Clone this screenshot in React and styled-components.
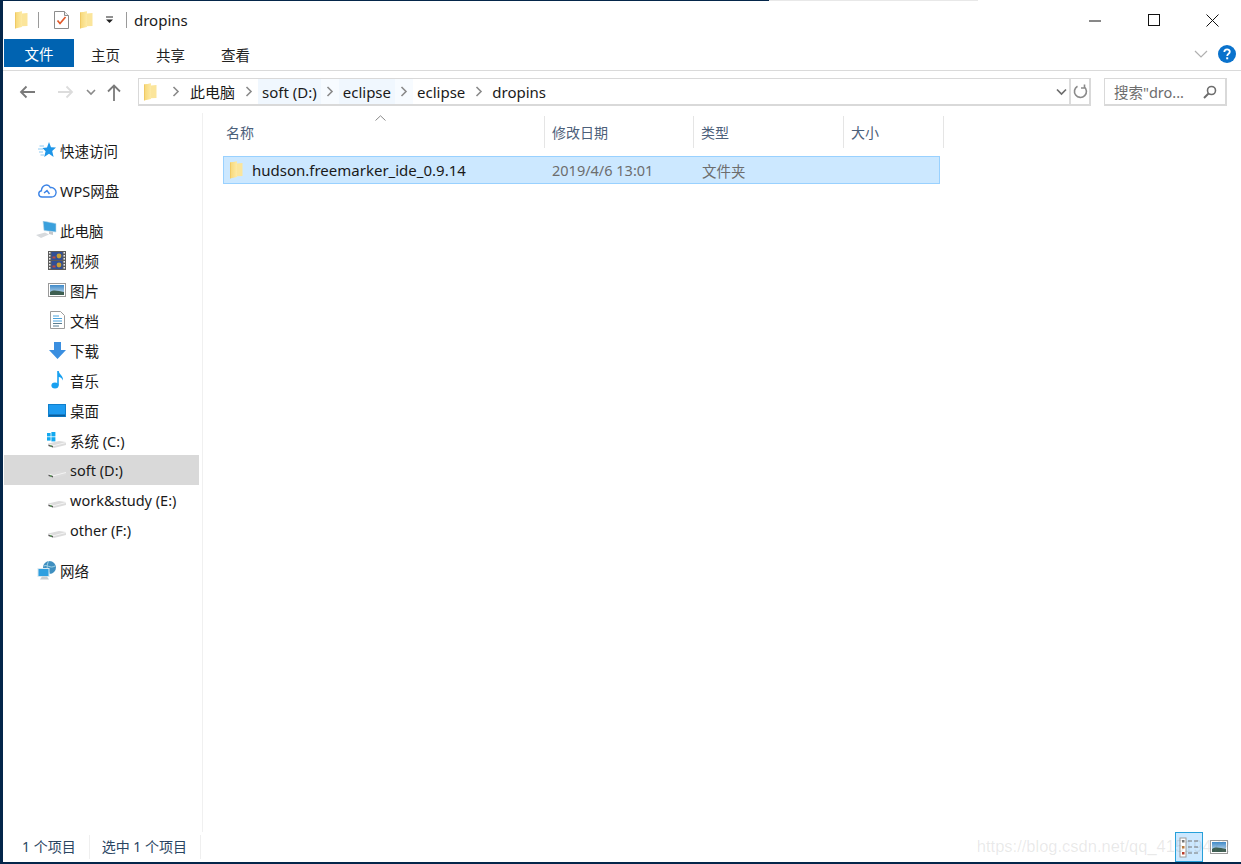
import React from 'react';
import styled, { createGlobalStyle } from 'styled-components';

const Global = createGlobalStyle`
  html, body { margin: 0; padding: 0; background: #fff; overflow: hidden; }
  * { box-sizing: border-box; }
  body { font-family: "Noto Sans", "Noto Sans CJK SC", sans-serif; font-size: 15px; color: #1a1a1a; }
`;

const Shell = styled.div`
  position: relative; width: 1241px; height: 864px; background: #fff;
  border-left: 3px solid #04264a; border-bottom: 2px solid #04264a;
  display: flex; flex-direction: column; overflow: hidden;
`;
const TopEdge = styled.div`
  height: 1px; flex: none;
  background: linear-gradient(90deg, #04264a 0, #04264a 766px, #e8e8e8 766px, #e8e8e8 975px, #fff 975px);
`;
const TitleBar = styled.div`
  height: 38px; flex: none; display: flex; align-items: center; padding-left: 12px;
`;
const TitleTools = styled.div`
  display: flex; align-items: center; flex: 1;
`;
const Sep = styled.span`
  width: 1px; height: 16px; background: #9a9a9a; margin: ${p => p.$m};
`;
const TitleText = styled.span`
  font-size: 15px; line-height: 20px; color: #1a1a1a; margin-left: 7px;
`;
const WinControls = styled.div`
  display: flex; align-items: center; height: 100%; margin-right: -1px;
`;
const WinBtn = styled.div`
  width: 58.5px; height: 100%; display: flex; align-items: center; justify-content: center; padding-top: 1px;
`;
const Ribbon = styled.div`
  height: 32px; flex: none; display: flex; align-items: flex-start; border-bottom: 1px solid #dadada;
  margin-left: 0; padding-left: 1px; position: relative;
`;
const FileTab = styled.div`
  width: 70px; height: 28px; background: #0063b1; color: #fff; font-size: 14.5px;
  display: flex; align-items: center; justify-content: center;
`;
const RibbonTabs = styled.div`
  display: flex; gap: 35px; margin-left: 17px; height: 28px; align-items: center; flex: 1; padding-top: 4px;
`;
const RibbonTab = styled.span`
  width: 30px; font-size: 14.5px; line-height: 20px; color: #222; white-space: nowrap;
`;
const RibbonRight = styled.div`
  display: flex; align-items: center; gap: 10px; margin-right: 5px; height: 30px;
`;
const NavBar = styled.div`
  height: 42px; flex: none; display: flex; align-items: flex-start; padding-top: 7px;
`;
const NavButtons = styled.div`
  width: 135px; height: 28px; flex: none; display: flex; align-items: center; padding-left: 16px;
`;
const Address = styled.div`
  width: 953px; height: 28px; flex: none; border: 2px solid #d9d9d9; border-width: 1px 2px 2px 1px; display: flex; align-items: stretch;
`;
const Crumbs = styled.div`
  flex: 1; display: flex; align-items: stretch; padding-left: 5px; min-width: 0;
`;
const CrumbIcon = styled.div`
  display: flex; align-items: center; width: 22px;
`;
const Crumb = styled.span`
  display: flex; align-items: center; padding: 0 ${p => p.$pad ?? 4}px; background: ${p => p.$hover ? '#f0f7fe' : 'transparent'};
  font-size: 15px; color: #1a1a1a; white-space: nowrap; margin-bottom: 0;
`;
const CrumbChevron = styled.span`
  display: flex; align-items: center; justify-content: center; width: ${p => p.$w}px;
  background: ${p => p.$hover ? '#f7fbff' : 'transparent'};
`;
const AddrEnd = styled.div`
  display: flex; align-items: center; justify-content: center; width: ${p => p.$w}px;
  border-left: ${p => p.$line ? '2px solid #dcdcdc' : 'none'};
`;
const Search = styled.div`
  width: 123px; height: 28px; margin-left: 13px; border: 2px solid #d9d9d9; border-width: 1px 2px 2px 1px; display: flex; align-items: center;
  padding: 0 8px 0 9px; justify-content: space-between; color: #6d6d6d; font-size: 14.5px; white-space: nowrap;
`;
const Body = styled.div`
  flex: 1; display: flex; min-height: 0;
`;
const Sidebar = styled.nav`
  width: 199px; flex: none; margin-right: 0; padding: 22px 0 0 1px; border-right: 0;
  display: flex; flex-direction: column;
`;
const SideDivider = styled.div`
  width: 1px; flex: none; background: #f0f0f0; margin-left: 0;
`;
const Group = styled.div`
  margin-bottom: 10px;
`;
const SideItem = styled.div`
  height: 30px; width: 195px; display: flex; align-items: center; font-size: 14.5px; color: #1a1a1a; white-space: nowrap;
  padding-left: ${p => p.$child ? 41 : 31}px; background: ${p => p.$on ? '#d9d9d9' : 'transparent'};
`;
const SideIcon = styled.span`
  width: ${p => p.$child ? 24 : 24}px; height: 20px; flex: none; display: flex; align-items: center; justify-content: center; margin-right: 1px;
`;
const Content = styled.main`
  flex: 1; display: flex; flex-direction: column; padding: 3px 0 0 19px; position: relative;
`;
const SortCaret = styled.svg`
  position: absolute; left: 172px; top: 2px;
`;
const HeaderRow = styled.div`
  display: flex; height: 32px; flex: none;
`;
const HeaderCell = styled.div`
  width: ${p => p.$w}px; padding-left: ${p => p.$pl ?? 7}px; border-right: 1px solid #e5e5e5; display: flex; align-items: center;
  font-size: 14px; color: #4c607a;
`;
const FileRow = styled.div`
  display: flex; align-items: center; width: 717px; height: 28px; margin: 8px 0 0 0; background: #cce8ff; border: 1px solid #99d1ff;
  margin-left: 1px;
`;
const FileName = styled.div`
  width: 321px; display: flex; align-items: center; padding-left: 6px; gap: 9px; font-size: 15px; color: #1a1a1a; white-space: nowrap;
`;
const FileMeta = styled.div`
  width: ${p => p.$w}px; padding-left: 7px; font-size: 14.5px; color: #6d6d6d; white-space: nowrap;
`;
const StatusBar = styled.footer`
  height: 30px; flex: none; display: flex; align-items: center; position: relative; padding-left: 19px;
  font-size: 14px; color: #2a4562;
`;
const StatusCell = styled.span`
  white-space: nowrap; padding-right: ${p => p.$pr}px; margin-right: 12px; border-right: 1px solid #efefef; line-height: 24px;
`;
const StatusSpacer = styled.div`
  flex: 1;
`;
const ViewBtn = styled.div`
  width: 28px; height: 30px; display: flex; align-items: center; justify-content: center;
  background: ${p => p.$on ? '#cce8ff' : 'transparent'}; border: ${p => p.$on ? '1px solid #26a0da' : 'none'};
`;
const ViewBtns = styled.div`
  display: flex; gap: 2px; margin-right: 8px; align-self: flex-end;
`;
const Watermark = styled.div`
  position: absolute; right: 11px; bottom: 6px; font-family: "Liberation Sans", sans-serif; font-size: 16.5px; color: rgba(120,120,120,.16); white-space: nowrap;
`;

const Folder = ({ w = 13, h = 18 }) => (
  <svg width={w} height={h} viewBox="0 0 13 18">
    <defs>
      <linearGradient id="fg" x1="0" y1="0" x2="1" y2="0">
        <stop offset="0" stopColor="#f7d774" /><stop offset="1" stopColor="#fdeaa6" />
      </linearGradient>
    </defs>
    <path d="M0 1.5 L7 0.5 V2.5 L12.5 2 V15 L0 15.5Z" fill="#fbe59b" />
    <path d="M0 1.5 L7 .5 V16 L0 17.5Z" fill="url(#fg)" />
    <path d="M0 1.5 L0 17.5" stroke="#e3b54d" strokeWidth=".8" />
  </svg>
);
const CheckDoc = () => (
  <svg width="15" height="18" viewBox="0 0 15 18">
    <path d="M.5.5H10.5L14.5 4.5V17.5H.5Z" fill="#fff" stroke="#8c8c8c" />
    <path d="M10.5.5V4.5H14.5" fill="#eee" stroke="#8c8c8c" />
    <path d="M3.5 9.5 L6 12.5 L11.5 6" fill="none" stroke="#e2592a" strokeWidth="1.7" />
  </svg>
);
const DropMark = () => (
  <svg width="9" height="8" viewBox="0 0 9 8"><path d="M1 1H8" stroke="#222" /><path d="M1 3.5H8L4.5 7Z" fill="#222" /></svg>
);
const Chevron = ({ c = '#8a8a8a' }) => (
  <svg width="8" height="11" viewBox="0 0 8 11"><path d="M1.5 1 L6 5.5 L1.5 10" fill="none" stroke={c} strokeWidth="1.6" /></svg>
);
const Star = () => (
  <svg width="18" height="16" viewBox="0 0 18 16">
    <path d="M11 0 L13 5.2 L18 5.6 L14.2 9 L15.6 15 L11 11.8 L6.2 15 L7.6 9.2 L4.4 6 L9 5.4Z" fill="#1e96e8" />
    <path d="M1.5 4H6M0 7H5M1 10H5M2.5 13H6" stroke="#8ccaf3" strokeWidth="1" />
  </svg>
);
const Cloud = () => (
  <svg width="20" height="16" viewBox="0 0 20 16">
    <path d="M5 15 C1 15 .7 9.5 4.4 8.8 C4.6 4 10.5 .3 13.4 5.6 C16.5 5 19.5 8 19 11 C18.6 13.6 16.5 15 14.5 15Z M5 15H14.5 M7 11 L10 8.6 L12.5 12" fill="none" stroke="#3c84e6" strokeWidth="1.4" />
  </svg>
);
const Computer = () => (
  <svg width="22" height="18" viewBox="0 0 22 18">
    <path d="M7 0 L20 2.5 V11 L8 9.5Z" fill="#3aa0dc" stroke="#bcd8ea" strokeWidth=".6" />
    <path d="M13 10 L13 13 L17 14 L17 11Z" fill="#c4c8cc" />
    <path d="M0 14 L9 11.5 L13 13.5 L5 17Z" fill="#d7dadd" />
  </svg>
);
const FilmIcon = () => (
  <svg width="18" height="19" viewBox="0 0 18 19">
    <rect width="18" height="19" fill="#5c5c5c" />
    <rect x="3.5" y="1" width="11" height="8" fill="#314f96" /><rect x="3.5" y="10" width="11" height="8" fill="#314f96" />
    <circle cx="11" cy="5" r="2.4" fill="#c9a033" /><circle cx="11" cy="14" r="2.4" fill="#c9a033" />
    <rect x="4.5" y="5.5" width="3" height="2" fill="#c14b3a" /><rect x="4.5" y="14.5" width="3" height="2" fill="#c14b3a" />
    {[1, 4, 7, 10, 13, 16].map(y => <g key={y}><rect x="1" y={y} width="1.5" height="1.6" fill="#eee" /><rect x="15.5" y={y} width="1.5" height="1.6" fill="#eee" /></g>)}
  </svg>
);
const PictureIcon = ({ w = 18, h = 14 }) => (
  <svg width={w} height={h} viewBox="0 0 18 14">
    <defs><linearGradient id="sky" x1="0" y1="0" x2="0" y2="1"><stop offset="0" stopColor="#3f8ac9" /><stop offset="1" stopColor="#d6e6f2" /></linearGradient></defs>
    <rect x=".5" y=".5" width="17" height="13" fill="#fff" stroke="#9a9a9a" />
    <rect x="2" y="2" width="14" height="10" fill="url(#sky)" />
    <path d="M2 9 C6 6 10 8 16 9 V12 H2Z" fill="#3e5f52" />
  </svg>
);
const DocIcon = () => (
  <svg width="15" height="18" viewBox="0 0 15 18">
    <path d="M.5.5H10.5L14.5 4.5V17.5H.5Z" fill="#fff" stroke="#9c9c9c" />
    <path d="M3 5H9M3 7.5H12M3 10H12" stroke="#4aa2dc" />
    <path d="M3 12.5H12M3 15H9" stroke="#5a7d90" />
  </svg>
);
const DownIcon = () => (
  <svg width="17" height="17" viewBox="0 0 17 17"><path d="M5 0H12V8H17L8.5 17L0 8H5Z" fill="#3b8fe0" /></svg>
);
const NoteIcon = () => (
  <svg width="13" height="18" viewBox="0 0 13 18">
    <ellipse cx="4" cy="14.5" rx="3.6" ry="3" fill="#18a0f0" />
    <path d="M6.2 14.5V0H7.8C8 3.5 12.5 4.5 12 9.5C11 7.2 9.5 6.2 7.8 6V14.5Z" fill="#18a0f0" />
  </svg>
);
const DesktopIcon = () => (
  <svg width="18" height="13" viewBox="0 0 18 13">
    <rect x=".5" y=".5" width="17" height="12" fill="#1e9bf0" stroke="#0f7fcc" />
    <rect x="1" y="10.5" width="16" height="1.8" fill="#0a5f9e" />
  </svg>
);
const Drive = ({ win }) => (
  <svg width="20" height="18" viewBox="0 0 20 18">
    {win && <g fill="#12a8ef"><rect x="0" y="2" width="3.6" height="3.4" /><rect x="4.4" y="1" width="4" height="4.4" /><rect x="0" y="6.2" width="3.6" height="3.4" /><rect x="4.4" y="6.2" width="4" height="4.2" /></g>}
    <path d="M1 12.5 L12 10 L19 11 V14 L7 17 L1 15Z" fill="#dcdcdc" />
    <path d="M1 13 L7 14.6 L19 11.5" fill="none" stroke="#f4f4f4" />
    <path d="M1.5 13.5 L6 15 V16.5 L1.5 15Z" fill="#555" />
    <rect x="3" y="14.5" width="1.6" height="1" fill="#5fbf5a" />
  </svg>
);
const NetIcon = () => (
  <svg width="20" height="19" viewBox="0 0 20 19">
    <circle cx="12.5" cy="6.5" r="6.5" fill="#3f8fc0" />
    <path d="M7 5 C10 3 13 8 18 5 M12 0 C9 4 10 9 13 13" fill="none" stroke="#a5d5e8" />
    <rect x="1" y="7.5" width="11" height="8" fill="#2f9fe0" stroke="#d8e8f0" />
    <path d="M3 18.5H12L10 15.5H5Z" fill="#c8ccd0" />
  </svg>
);

const nav = [
  [{ icon: <Star />, label: '快速访问' }],
  [{ icon: <Cloud />, label: 'WPS网盘' }],
  [
    { icon: <Computer />, label: '此电脑' },
    { icon: <FilmIcon />, label: '视频', child: true },
    { icon: <PictureIcon />, label: '图片', child: true },
    { icon: <DocIcon />, label: '文档', child: true },
    { icon: <DownIcon />, label: '下载', child: true },
    { icon: <NoteIcon />, label: '音乐', child: true },
    { icon: <DesktopIcon />, label: '桌面', child: true },
    { icon: <Drive win />, label: '系统 (C:)', child: true },
    { icon: <Drive />, label: 'soft (D:)', child: true, on: true },
    { icon: <Drive />, label: 'work&study (E:)', child: true },
    { icon: <Drive />, label: 'other (F:)', child: true },
  ],
  [{ icon: <NetIcon />, label: '网络' }],
];

export default function App() {
  return (
    <>
      <Global />
      <Shell>
        <TopEdge />
        <TitleBar>
          <TitleTools>
            <Folder />
            <Sep $m="0 15px 0 10px" />
            <CheckDoc />
            <span style={{ width: 11 }} />
            <Folder />
            <span style={{ width: 12 }} />
            <DropMark />
            <Sep $m="0 0 0 12px" />
            <TitleText>dropins</TitleText>
          </TitleTools>
          <WinControls>
            <WinBtn><svg width="13" height="12" viewBox="0 0 13 12"><path d="M0 6H12" stroke="#111" strokeWidth="1" /></svg></WinBtn>
            <WinBtn><svg width="13" height="13" viewBox="0 0 13 13"><rect x=".5" y=".5" width="11" height="11" fill="none" stroke="#111" /></svg></WinBtn>
            <WinBtn><svg width="13" height="13" viewBox="0 0 13 13"><path d="M.5.5L12.5 12.5M12.5.5L.5 12.5" stroke="#111" /></svg></WinBtn>
          </WinControls>
        </TitleBar>
        <Ribbon>
          <FileTab>文件</FileTab>
          <RibbonTabs>
            <RibbonTab>主页</RibbonTab>
            <RibbonTab>共享</RibbonTab>
            <RibbonTab>查看</RibbonTab>
          </RibbonTabs>
          <RibbonRight>
            <svg width="14" height="8" viewBox="0 0 14 8"><path d="M1 1L7 7L13 1" fill="none" stroke="#b0b0b0" strokeWidth="1.2" /></svg>
            <svg width="18" height="18" viewBox="0 0 18 18"><circle cx="9" cy="9" r="9" fill="#0a72cc" /><path d="M6.3 7C6.4 3.6 11.8 3.6 11.8 6.8C11.8 8.8 9.2 8.8 9.2 11" fill="none" stroke="#fff" strokeWidth="1.8" /><rect x="8.2" y="12.3" width="2" height="2" fill="#fff" /></svg>
          </RibbonRight>
        </Ribbon>
        <NavBar>
          <NavButtons>
            <svg width="17" height="14" viewBox="0 0 17 14"><path d="M16 7H2M7.5 1.5L2 7L7.5 12.5" fill="none" stroke="#7a7a7a" strokeWidth="1.8" /></svg>
            <span style={{ width: 21 }} />
            <svg width="17" height="14" viewBox="0 0 17 14"><path d="M1 7H15M9.5 1.5L15 7L9.5 12.5" fill="none" stroke="#dcdcdc" strokeWidth="1.8" /></svg>
            <span style={{ width: 12 }} />
            <svg width="10" height="7" viewBox="0 0 10 7"><path d="M1 1L5 5L9 1" fill="none" stroke="#8a8a8a" strokeWidth="1.6" /></svg>
            <span style={{ width: 11 }} />
            <svg width="14" height="17" viewBox="0 0 14 17"><path d="M7 17V2M1 7.5L7 1.5L13 7.5" fill="none" stroke="#7a7a7a" strokeWidth="1.8" /></svg>
          </NavButtons>
          <Address>
            <Crumbs>
              <CrumbIcon><Folder w={13} h={18} /></CrumbIcon>
              <CrumbChevron $w={20}><Chevron /></CrumbChevron>
              <Crumb $pad={4}>此电脑</Crumb>
              <CrumbChevron $w={19}><Chevron /></CrumbChevron>
              <Crumb $pad={4} $hover>soft (D:)</Crumb>
              <CrumbChevron $w={18} $hover><Chevron /></CrumbChevron>
              <Crumb $pad={4} $hover>eclipse</Crumb>
              <CrumbChevron $w={18} $hover><Chevron /></CrumbChevron>
              <Crumb $pad={4}>eclipse</Crumb>
              <CrumbChevron $w={19}><Chevron /></CrumbChevron>
              <Crumb $pad={4}>dropins</Crumb>
            </Crumbs>
            <AddrEnd $w={16}><svg width="11" height="8" viewBox="0 0 11 8"><path d="M1 1.5L5.5 6L10 1.5" fill="none" stroke="#6d6d6d" strokeWidth="1.7" /></svg></AddrEnd>
            <AddrEnd $w={20} $line><svg width="15" height="15" viewBox="0 0 15 15"><path d="M11 2.6A6 6 0 1 1 4.5 2.2M11.5 0.5V4H8" fill="none" stroke="#8a8a8a" strokeWidth="1.6" /></svg></AddrEnd>
          </Address>
          <Search>
            <span>搜索"dro...</span>
            <svg width="14" height="14" viewBox="0 0 14 14"><circle cx="8.5" cy="5.5" r="4" fill="none" stroke="#6d6d6d" strokeWidth="1.6" /><path d="M5.5 8.5L1 13" stroke="#6d6d6d" strokeWidth="2" /></svg>
          </Search>
        </NavBar>
        <Body>
          <Sidebar>
            {nav.map((g, i) => (
              <Group key={i}>
                {g.map(it => (
                  <SideItem key={it.label} $child={it.child} $on={it.on}>
                    <SideIcon>{it.icon}</SideIcon>
                    {it.label}
                  </SideItem>
                ))}
              </Group>
            ))}
          </Sidebar>
          <SideDivider />
          <Content>
            <SortCaret width="11" height="6" viewBox="0 0 11 6"><path d="M.5 5.5L5.5 .8L10.5 5.5" fill="none" stroke="#8a8a8a" /></SortCaret>
            <HeaderRow>
              <HeaderCell $w={323} $pl={4}>名称</HeaderCell>
              <HeaderCell $w={149}>修改日期</HeaderCell>
              <HeaderCell $w={150}>类型</HeaderCell>
              <HeaderCell $w={100}>大小</HeaderCell>
            </HeaderRow>
            <FileRow>
              <FileName><Folder w={13} h={18} />hudson.freemarker_ide_0.9.14</FileName>
              <FileMeta $w={150}>2019/4/6 13:01</FileMeta>
              <FileMeta $w={150}>文件夹</FileMeta>
            </FileRow>
          </Content>
        </Body>
        <StatusBar>
          <StatusCell $pr={13}>1 个项目</StatusCell>
          <StatusCell $pr={13}>选中 1 个项目</StatusCell>
          <StatusSpacer />
          <ViewBtns>
            <ViewBtn $on>
              <svg width="20" height="21" viewBox="0 0 20 21">
                <rect x="1" y="1" width="6" height="19" fill="#fff" stroke="#9a9a9a" />
                <rect x="3" y="3" width="2.5" height="2.5" fill="#777" /><rect x="3" y="9" width="2.5" height="2.5" fill="#c07a3a" /><rect x="3" y="15" width="2.5" height="2.5" fill="#b83a2a" />
                <path d="M9 4H13M15 4H19M9 10H13M15 10H19M9 16H13M15 16H19" stroke="#777" />
              </svg>
            </ViewBtn>
            <ViewBtn><PictureIcon w={18} h={14} /></ViewBtn>
          </ViewBtns>
          <Watermark>https://blog.csdn.net/qq_41519472</Watermark>
        </StatusBar>
      </Shell>
    </>
  );
}
